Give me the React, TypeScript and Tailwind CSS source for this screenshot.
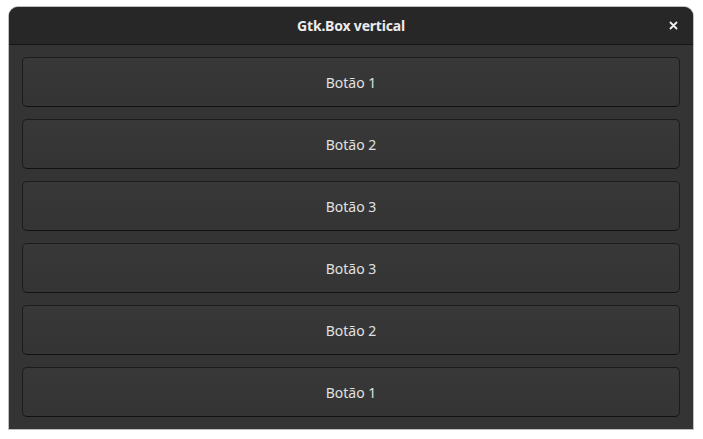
import React from "react";

const labels = ["Botão 1", "Botão 2", "Botão 3", "Botão 3", "Botão 2", "Botão 1"];

function CloseIcon() {
  return (
    <svg width="9" height="9" viewBox="0 0 9 9">
      <path d="M1.5 1.5 L7.5 7.5 M7.5 1.5 L1.5 7.5" stroke="#f2f2f2" strokeWidth="1.8" strokeLinecap="round" />
    </svg>
  );
}

export default function App() {
  return (
    <div className="w-[703px] h-[439px] bg-white pt-[7px] pl-[9px] font-['Noto_Sans','Liberation_Sans',sans-serif]">
      <div className="w-[684px] h-[422px] flex flex-col rounded-t-[9px] overflow-hidden bg-[#343434] shadow-[0_0_0_1px_rgba(0,0,0,0.25)]">
        <div className="h-[38px] flex items-center justify-center relative bg-[#272727] border-b border-[#161616]">
          <span className="text-[14px] font-bold text-[#ececec] tracking-[-0.2px]">Gtk.Box vertical</span>
          <button className="absolute right-[15px] top-[14px] w-[9px] h-[9px] flex items-center justify-center">
            <CloseIcon />
          </button>
        </div>
        <div className="flex flex-col gap-[12px] px-[13px] pt-[12px]">
          {labels.map((label, idx) => (
            <div
              key={idx}
              className="h-[50px] flex items-center justify-center rounded-[5px] border border-[#1c1c1c] border-b-[#121212] bg-gradient-to-b from-[#383838] to-[#343434] text-[14px] text-[#e0e0e0]"
            >
              {label}
            </div>
          ))}
        </div>
      </div>
    </div>
  );
}
